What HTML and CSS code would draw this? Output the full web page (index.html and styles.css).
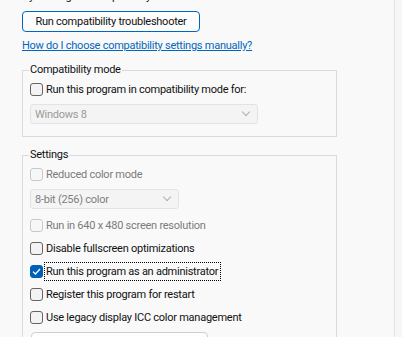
FILE: index.html
```html
<!DOCTYPE html>
<html lang="en">
<head>
    <meta charset="UTF-8">
    <title>Compatibility</title>
    <link rel="stylesheet" href="styles.css">
</head>
<body>
    <div class="window">
        <div class="tab-page">
            <p class="intro">try running the compatibility troubleshooter.</p>

            <button class="push-button default">Run compatibility troubleshooter</button>

            <div class="link-row">
                <a href="#" class="help-link">How do I choose compatibility settings manually?</a>
            </div>

            <fieldset class="group">
                <legend>Compatibility mode</legend>
                <label class="check-row">
                    <span class="check"></span>
                    <span>Run this program in compatibility mode for:</span>
                </label>
                <div class="combo disabled wide">
                    <span>Windows 8</span>
                    <span class="chevron"></span>
                </div>
            </fieldset>

            <fieldset class="group settings">
                <legend>Settings</legend>
                <label class="check-row disabled">
                    <span class="check"></span>
                    <span>Reduced color mode</span>
                </label>
                <div class="combo disabled narrow">
                    <span>8-bit (256) color</span>
                    <span class="chevron"></span>
                </div>
                <label class="check-row disabled">
                    <span class="check"></span>
                    <span>Run in 640 x 480 screen resolution</span>
                </label>
                <label class="check-row">
                    <span class="check"></span>
                    <span>Disable fullscreen optimizations</span>
                </label>
                <label class="check-row">
                    <span class="check checked">
                        <svg width="9" height="7" viewBox="0 0 9 7"><path d="M1 3.6 L3.4 6 L8 1" fill="none" stroke="#fff" stroke-width="1.3"/></svg>
                    </span>
                    <span class="focused">Run this program as an administrator</span>
                </label>
                <label class="check-row">
                    <span class="check"></span>
                    <span>Register this program for restart</span>
                </label>
                <label class="check-row">
                    <span class="check"></span>
                    <span>Use legacy display ICC color management</span>
                </label>
                <button class="push-button dpi">Change high DPI settings</button>
            </fieldset>
        </div>
        <div class="side-strip"></div>
    </div>
</body>
</html>
```

FILE: styles.css
```css
html, body {
    margin: 0;
    height: 100%;
    overflow: hidden;
}
body {
    background: #f9f9f9;
    font-family: Roboto, "Noto Sans", sans-serif;
    font-size: 11px;
    letter-spacing: -0.25px;
    color: #111;
}
.window {
    display: flex;
    height: 337px;
    overflow: hidden;
}
.tab-page {
    flex: 1;
    padding-left: 22px;
}
.side-strip {
    width: 7px;
    border-left: 1px solid #e2e2e2;
    background: #f6f6f6;
}
.intro {
    margin: -11px 0 0 0;
    line-height: 16px;
    height: 16px;
    white-space: nowrap;
}
.push-button {
    display: block;
    font-family: inherit;
    font-size: 11px;
    letter-spacing: -0.25px;
    color: #111;
    background: #fdfdfd;
    border: 1px solid #d0d0d0;
    border-radius: 4px;
    height: 21px;
    padding: 0;
    white-space: nowrap;
}
.push-button.default {
    margin-top: 6px;
    width: 178px;
    border-color: #0067c0;
}
.link-row {
    margin-top: 6px;
    line-height: 16px;
    white-space: nowrap;
}
.help-link {
    color: #0067c0;
    text-decoration: underline;
}
.group {
    width: 315px;
    box-sizing: border-box;
    margin: 8px 0 0 0;
    padding: 4px 6px 12px 7px;
    border: 1px solid #dadada;
}
.group legend {
    padding: 0 1px;
    line-height: 16px;
    margin-left: -1px;
}
.group.settings {
    margin-top: 10px;
    padding-bottom: 40px;
}
.check-row {
    display: flex;
    align-items: center;
    gap: 3px;
    height: 15px;
    line-height: 15px;
    margin-bottom: 8px;
    white-space: nowrap;
}
.check-row.disabled {
    color: #7b7b7b;
}
.check {
    width: 11px;
    height: 11px;
    flex: none;
    border: 1px solid #646464;
    border-radius: 3px;
    background: #f3f3f3;
    display: flex;
    align-items: center;
    justify-content: center;
}
.check-row.disabled .check {
    border-color: #c9c9c9;
    background: #f7f7f7;
}
.check.checked {
    background: #005fb8;
    border-color: #005fb8;
}
.focused {
    outline: 1px dotted #000;
    outline-offset: 1px;
    padding: 0 1px 0 0;
}
.combo {
    display: flex;
    align-items: center;
    justify-content: space-between;
    height: 18px;
    box-sizing: content-box;
    padding: 0 8px 0 4px;
    border: 1px solid #e3e3e3;
    border-radius: 3px;
    background: #f4f4f4;
    color: #9a9a9a;
    margin-top: -1px;
}
.combo.wide {
    width: 214px;
}
.combo.narrow {
    width: 135px;
    color: #7f7f7f;
    margin-bottom: 9px;
}
.chevron {
    width: 5px;
    height: 5px;
    border-right: 1px solid #b0b0b0;
    border-bottom: 1px solid #b0b0b0;
    transform: translateY(-2px) rotate(45deg);
}
.push-button.dpi {
    margin: -1px 0 0 1px;
    width: 177px;
}
```
